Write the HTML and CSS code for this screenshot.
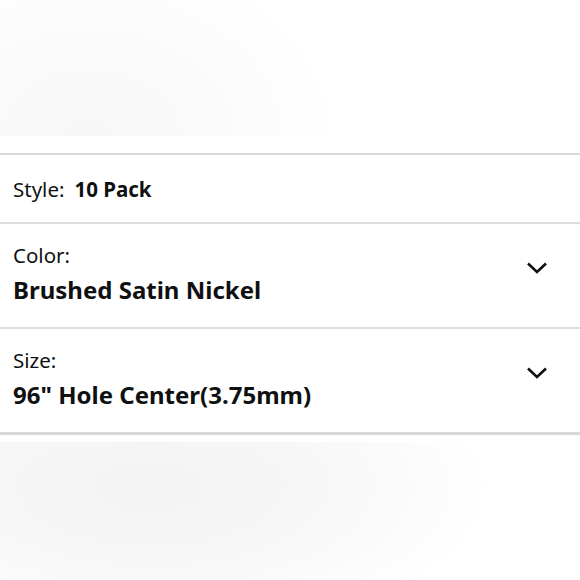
FILE: index.html
```html
<!DOCTYPE html>
<html>
<head>
<meta charset="utf-8">
<link rel="stylesheet" href="styles.css">
</head>
<body>
<div class="hero"></div>
<div class="variations">
  <div class="row row-inline">
    <span class="label">Style:</span>
    <span class="value">10 Pack</span>
  </div>
  <div class="row row-select">
    <div class="text">
      <div class="label">Color:</div>
      <div class="value">Brushed Satin Nickel</div>
    </div>
    <svg class="chevron" viewBox="0 0 22 12" width="22" height="12"><path d="M2 1.5 L11 10 L20 1.5" fill="none" stroke="#0f1111" stroke-width="2.6"/></svg>
  </div>
  <div class="row row-select last">
    <div class="text">
      <div class="label">Size:</div>
      <div class="value">96" Hole Center(3.75mm)</div>
    </div>
    <svg class="chevron" viewBox="0 0 22 12" width="22" height="12"><path d="M2 1.5 L11 10 L20 1.5" fill="none" stroke="#0f1111" stroke-width="2.6"/></svg>
  </div>
</div>
<div class="bottom"></div>
</body>
</html>
```
FILE: styles.css
```css
html, body {
  margin: 0;
  padding: 0;
  background: #ffffff;
}
body {
  width: 580px;
  height: 580px;
  overflow: hidden;
  font-family: "Noto Sans", "Open Sans", sans-serif;
  color: #0f1111;
}
.hero {
  height: 136px;
  background: radial-gradient(ellipse 250px 190px at 90px 140px, #f7f7f7 0%, #fafafa 45%, #ffffff 100%);
}
.variations {
  margin-top: 17px;
  border-top: 2px solid #d5d9d9;
}
.row {
  border-bottom: 2px solid #dcdede;
  padding: 0 13px;
}
.row.last {
  border-bottom: 3px solid #d5d9d9;
}
.row-inline {
  height: 67px;
  display: flex;
  align-items: center;
  gap: 10px;
  font-size: 20.5px;
}
.row-inline .value {
  font-weight: 700;
}
.row-select {
  height: 101px;
  padding-bottom: 2px;
  display: flex;
  align-items: center;
  justify-content: space-between;
  padding-right: 32px;
}
.row-select .label {
  font-size: 20.5px;
  line-height: 26px;
  margin-bottom: 4px;
}
.row-select .value {
  font-size: 24px;
  font-weight: 700;
  line-height: 36px;
}
.chevron {
  display: block;
  margin-top: -14px;
}
.bottom {
  height: 137px;
  margin-top: 7px;
  background: radial-gradient(ellipse 340px 150px at 150px 45px, #f3f3f3 0%, #f6f6f6 40%, #fafafa 70%, #ffffff 100%);
}
```
